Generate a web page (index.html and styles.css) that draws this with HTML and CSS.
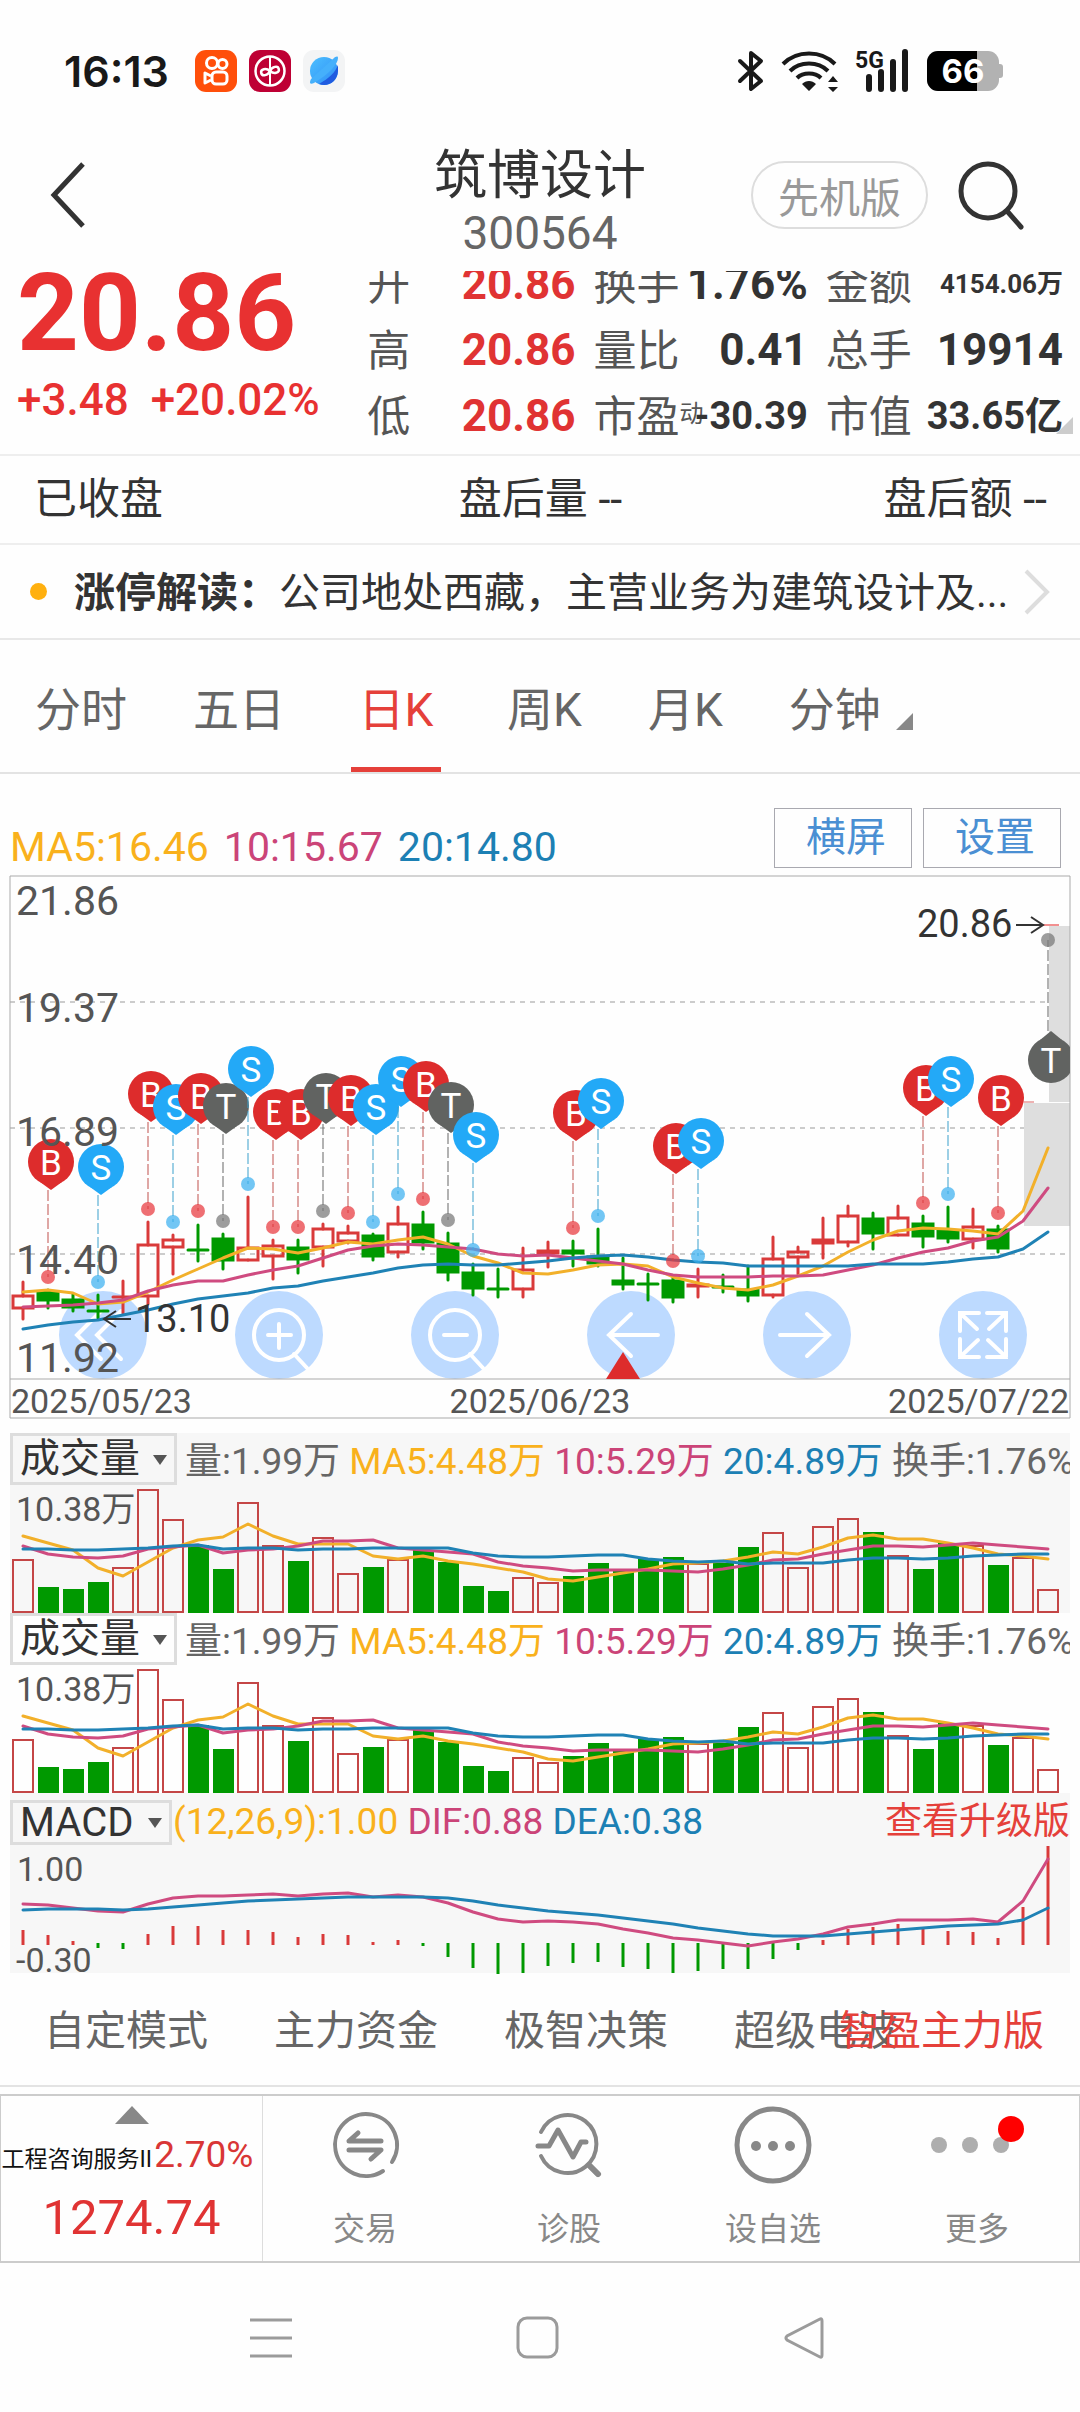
FILE: index.html
```html
<!DOCTYPE html>
<html lang="zh-CN">
<head>
<meta charset="utf-8">
<meta name="viewport" content="width=device-width">
<title>筑博设计 300564</title>
<link rel="stylesheet" href="styles.css">
</head>
<body>
<div class="status">
  <div class="status-left">
    <span class="clock">16:13</span>
    <svg class="app-icon" viewBox="0 0 42 42"><rect width="42" height="42" rx="11" fill="#ff4f0a"/><g fill="none" stroke="#fff" stroke-width="3"><circle cx="17" cy="13" r="5.500"/><circle cx="27.500" cy="14" r="4.500"/><rect x="17" y="22" width="15" height="12" rx="4"/><path d="M16 26l-6-3v10l6-3" stroke-linejoin="round"/></g></svg>
    <svg class="app-icon" viewBox="0 0 42 42"><rect width="42" height="42" rx="11" fill="#be0034"/><g fill="none" stroke="#fff" stroke-width="2"><circle cx="21" cy="21" r="14.500" stroke-width="2.500"/><path d="M21 7v12M21 23v12"/><path d="M21 21c-3-4-9-4-9 0s6 4 9 0 9-4 9 0-6 4-9 0z" stroke-width="2.500" transform="rotate(-12 21 21)"/></g></svg>
    <svg class="app-icon" viewBox="0 0 42 42"><defs><linearGradient id="planet" x1="0" y1="0" x2="1" y2="1"><stop offset="0" stop-color="#4cc0ff"/><stop offset="1" stop-color="#2f8cf5"/></linearGradient></defs><rect width="42" height="42" rx="11" fill="#f3f4f5"/><circle cx="21" cy="21" r="14" fill="url(#planet)"/><path d="M35 15c-3 8-9 13-19 19 8 3 18-1 19-13z" fill="#1f5be0"/><path d="M30 9c3-3 5-3 5-1 0 6-9 16-24 25-4 2-5 0-3-4z" fill="#45b0fb"/></svg>
  </div>
  <div class="status-right">
    <svg width="28" height="42" viewBox="0 0 28 42" fill="none" stroke="#191919" stroke-width="4" stroke-linejoin="round" stroke-linecap="round"><path d="M3 11l21 20-10 8V3l10 8L3 31"/></svg>
    <svg width="58" height="42" viewBox="0 0 58 42" fill="none" stroke="#191919" stroke-width="4"><path d="M2 14c14-14 38-14 52 0M9 21c10-10 28-10 38 0M16 28c6-6 18-6 24 0"/><path d="M28 41l-7-7c4-4 10-4 14 0zM52 26l5 6H47zM52 42l5-5H47z" fill="#191919" stroke="none"/></svg>
    <svg class="signal" width="56" height="44" viewBox="0 0 56 44"><text x="0" y="19" font-size="23">5G</text><path d="M14 28v12M26 23v17M38 13v27M50 3v37" stroke="#191919" stroke-width="6" stroke-linecap="round"/></svg>
    <svg class="battery" width="76" height="40" viewBox="0 0 76 40"><defs><clipPath id="cell"><rect width="72" height="40" rx="11"/></clipPath></defs><rect x="68" y="13" width="8" height="14" rx="3" fill="#b2b2b2"/><g clip-path="url(#cell)"><rect width="72" height="40" fill="#b2b2b2"/><rect width="50" height="40"/></g><text x="36" y="32" text-anchor="middle" font-size="33">66</text></svg>
  </div>
</div>

<header class="titlebar">
  <button class="back" aria-label="返回"><svg width="36" height="66" viewBox="0 0 36 66" fill="none" stroke="#333" stroke-width="5"><path d="M33 2L4 33l29 31"/></svg></button>
  <div class="titles"><h1>筑博设计</h1><p>300564</p></div>
  <div class="title-actions">
    <button class="pill">先机版</button>
    <button class="search" aria-label="搜索"><svg width="66" height="70" viewBox="0 0 66 70" fill="none" stroke="#333" stroke-width="5" stroke-linecap="round"><circle cx="30" cy="31" r="27"/><path d="M49 51l14 16"/></svg></button>
  </div>
</header>

<section class="quote">
  <div class="quote-scroll">
    <div class="price">
      <strong>20.86</strong>
      <p><span>+3.48</span><span>+20.02%</span></p>
    </div>
    <dl>
      <div><dt>开</dt><dd class="up">20.86</dd></div>
      <div><dt>高</dt><dd class="up">20.86</dd></div>
      <div><dt>低</dt><dd class="up">20.86</dd></div>
    </dl>
    <dl>
      <div><dt>换手</dt><dd>1.76%</dd></div>
      <div><dt>量比</dt><dd>0.41</dd></div>
      <div><dt>市盈<small>动</small></dt><dd class="medium">-30.39</dd></div>
    </dl>
    <dl>
      <div><dt>金额</dt><dd class="small">4154.06万</dd></div>
      <div><dt>总手</dt><dd>19914</dd></div>
      <div><dt>市值</dt><dd class="medium">33.65亿</dd></div>
    </dl>
  </div>
  <i class="corner"></i>
</section>

<section class="after-hours"><span>已收盘</span><span>盘后量 --</span><span>盘后额 --</span></section>

<a class="notice" href="#notice"><i></i><p><b>涨停解读：</b>公司地处西藏，主营业务为建筑设计及...</p><svg width="28" height="46" viewBox="0 0 28 46" fill="none" stroke="#ddd" stroke-width="4"><path d="M3 2l21 21L3 44"/></svg></a>

<nav class="periods">
  <button>分时</button><button>五日</button><button class="active">日K</button><button>周K</button><button>月K</button><button class="more">分钟</button>
</nav>

<section class="legend">
  <p><span class="c5">MA5:16.46</span><span class="c10">10:15.67</span><span class="c20">20:14.80</span></p>
  <button>横屏</button><button>设置</button>
</section>

<section class="kline">
  <div class="controls">
    <button aria-label="最早"><svg viewBox="0 0 88 88"><path d="M42 20L18 44l24 24M62 20L38 44l24 24"/></svg></button>
    <button aria-label="放大"><svg viewBox="0 0 88 88"><circle cx="44" cy="44" r="25"/><path d="M33 44h23M44 33v24M59 63l13 14"/></svg></button>
    <button aria-label="缩小"><svg viewBox="0 0 88 88"><circle cx="44" cy="44" r="25"/><path d="M33 44h23M59 63l13 14"/></svg></button>
    <button aria-label="左移"><svg viewBox="0 0 88 88"><path d="M71 44H22M44 23L22 44l22 21"/></svg></button>
    <button aria-label="右移"><svg viewBox="0 0 88 88"><path d="M17 44h49M44 23l22 21-22 21"/></svg></button>
    <button aria-label="全屏"><svg viewBox="0 0 88 88"><path d="M40 22H21v18M21 22l17 16M48 22h19v18M67 22L50 38M40 66H21V48M21 66l18-17M48 66h19V48M67 66L49 49"/></svg></button>
  </div>
  <svg id="kline" viewBox="0 0 1080 550"></svg>
</section>

<section class="panel gray">
  <div class="panel-head">
    <label class="pick"><select aria-label="指标一"><option>成交量</option></select></label>
    <p>量:1.99万 <span class="c5">MA5:4.48万</span> <span class="c10">10:5.29万</span> <span class="c20">20:4.89万</span> 换手:1.76%</p>
  </div>
  <svg class="volume" viewBox="10 52 1060 128"></svg>
</section>
<section class="panel">
  <div class="panel-head">
    <label class="pick"><select aria-label="指标二"><option>成交量</option></select></label>
    <p>量:1.99万 <span class="c5">MA5:4.48万</span> <span class="c10">10:5.29万</span> <span class="c20">20:4.89万</span> 换手:1.76%</p>
  </div>
  <svg class="volume" viewBox="10 52 1060 128"></svg>
</section>
<section class="panel gray">
  <div class="panel-head macd-head">
    <label class="pick"><select aria-label="指标三"><option>MACD</option></select></label>
    <p><span class="c5">(12,26,9):1.00</span> <span class="c10">DIF:0.88</span> <span class="c20">DEA:0.38</span></p>
    <a href="#upgrade">查看升级版</a>
  </div>
  <svg id="macd" viewBox="10 52 1060 128"></svg>
</section>

<nav class="modes">
  <a href="#custom">自定模式</a><a href="#funds">主力资金</a><a href="#decision">极智决策</a><a href="#wave">超级电波</a><a class="pro" href="#pro">智盈主力版</a>
</nav>

<footer class="toolbar">
  <a class="sector" href="#sector">
    <i></i>
    <p>工程咨询服务II<b>2.70%</b></p>
    <strong>1274.74</strong>
  </a>
  <button><svg viewBox="0 0 80 80"><path d="M67 57A31 31 0 1 0 58 66" stroke-width="4"/><path d="M56 36H24l9-8M24 45h32l-10 9" stroke-width="5"/></svg>交易</button>
  <button><svg viewBox="0 0 80 80"><path d="M12 27a29 29 0 1 1 0 24M60 61l9 9" stroke-width="4"/><path d="M61 61l8 8" stroke-width="6"/><path d="M9 41h11l9-16 15 27 8-15h5" stroke-width="5"/></svg>诊股</button>
  <button><svg viewBox="0 0 80 80"><circle cx="40" cy="40" r="36" stroke-width="5"/><g class="solid"><circle cx="23" cy="41" r="5"/><circle cx="40" cy="41" r="5"/><circle cx="57" cy="41" r="5"/></g></svg>设自选</button>
  <button><svg viewBox="0 0 80 80"><g class="pale"><circle cx="2" cy="40" r="8"/><circle cx="33" cy="40" r="8"/><circle cx="64" cy="40" r="8"/></g><circle class="dot" cx="74" cy="24" r="13"/></svg>更多</button>
</footer>

<nav class="system">
  <button aria-label="最近任务"><svg viewBox="0 0 44 44"><path d="M1 4h42M1 22h42M1 40h42"/></svg></button>
  <button aria-label="主屏幕"><svg viewBox="0 0 44 44"><rect x="2" y="2" width="39" height="39" rx="9"/></svg></button>
  <button aria-label="后退"><svg viewBox="0 0 44 44"><path d="M37 3L4 20q-2 2 0 4l33 17q2 1 2-2V5q0-3-2-2z"/></svg></button>
</nav>
<script src="charts.js"></script>
</body>
</html>
```
FILE: styles.css
```css
* { box-sizing: border-box; }
body {
  margin: 0;
  background: #fefefe;
  color: #333;
  font-family: Roboto, "Noto Sans CJK SC", sans-serif;
  overflow-x: hidden;
}
h1, p, dl, dd { margin: 0; }
button, select { font: inherit; color: inherit; background: none; border: 0; padding: 0; margin: 0; }
a { color: inherit; text-decoration: none; }
svg { display: block; }
svg text { font-family: Roboto, "Noto Sans CJK SC", sans-serif; }

.c5 { color: #f9b11c; }
.c10 { color: #cb4478; }
.c20 { color: #1c80b4; }

/* phone status bar */
.status { display: flex; justify-content: space-between; align-items: center; height: 142px; padding: 0 77px 0 64px; }
.status-left, .status-right { display: flex; align-items: center; }
.status-left { gap: 12px; }
.clock { font: 600 43px/50px Inter, sans-serif; color: #191919; margin-right: 14px; }
.app-icon { width: 42px; height: 42px; }
.status-right { gap: 16px; }
.status .signal text { font-family: Roboto, sans-serif; font-weight: 700; fill: #191919; }
.status .battery text { font-family: Inter, sans-serif; font-weight: 700; fill: #fff; }

.titlebar { display: grid; grid-template-columns: 1fr auto 1fr; height: 129px; }
.back { justify-self: start; align-self: center; padding: 0 0 23px 50px; }
.titles { text-align: center; padding-top: 4px; }
.titles h1 { font-size: 53px; line-height: 60px; font-weight: 400; }
.titles p { font-size: 46px; line-height: 54px; color: #666; }
.title-actions { display: flex; justify-content: flex-end; align-items: center; gap: 30px; padding: 0 56px 23px 0; }
.pill { width: 177px; height: 68px; border: 2px solid #ddd; border-radius: 34px; font-size: 41px; color: #999; }

/* price and key figures, scrolled a little under the title bar */
.quote { position: relative; overflow: hidden; }
.quote-scroll {
  display: grid;
  grid-template-columns: minmax(0, 332fr) minmax(0, 208fr) minmax(0, 214fr) minmax(0, 237fr);
  column-gap: 18px;
  margin-top: -20px;
  padding: 0 17px 5px 17px;
}
.price { padding-top: 7px; color: #e83131; white-space: nowrap; }
.price strong { display: block; font-size: 108px; line-height: 110px; font-weight: 700; }
.price p { display: flex; gap: 22px; font-size: 44px; line-height: 64px; font-weight: 500; }
.quote dl div { display: flex; justify-content: space-between; align-items: center; height: 66px; white-space: nowrap; }
.quote dt { font-size: 43px; color: #555; padding-bottom: 6px; }
.quote dt small { font-size: 24px; margin-right: -12px; vertical-align: 10px; line-height: 24px; }
.quote dd { font-size: 44px; line-height: 66px; font-weight: 700; }
.quote dd.medium { font-size: 38px; }
.quote dd.small { font-size: 26px; }
.quote dd.up { color: #e03333; }
.corner { position: absolute; right: 7px; bottom: 20px; border-left: 17px solid transparent; border-bottom: 17px solid #ccc; }

.after-hours {
  display: grid; grid-template-columns: 1fr auto 1fr; align-items: center;
  height: 89px; padding: 0 33px 10px 34px; border-top: 2px solid #eee;
  font-size: 43px;
}
.after-hours span:last-child { text-align: right; }

.notice { display: flex; align-items: center; height: 95px; padding: 0 29px 0 30px; border-top: 2px solid #eee; font-size: 41px; }
.notice i { flex: none; width: 17px; height: 17px; border-radius: 50%; background: #ffb00f; margin-right: 27px; }
.notice p { flex: 1; white-space: nowrap; overflow: hidden; padding-bottom: 6px; }

.periods { display: flex; gap: 66px; height: 136px; padding: 0 35px; border-top: 2px solid #e8e8e8; border-bottom: 2px solid #e3e3e3; font-size: 46px; color: #666; }
.periods button { display: flex; align-items: center; justify-content: center; }
.periods .active { min-width: 90px; color: #e5403a; box-shadow: inset 0 -5px #e5403a; border-radius: 3px 3px 0 0; }
.more::after { content: ""; margin: 30px 0 0 15px; border-left: 17px solid transparent; border-bottom: 17px solid #888; }

.legend { display: flex; align-items: flex-end; gap: 11px; padding: 34px 19px 2px 10px; font-size: 41px; }
.legend p { flex: 1; display: flex; gap: 15px; line-height: 42px; white-space: nowrap; }
.legend button { width: 138px; height: 60px; border: 1px solid #a9a9b0; padding-left: 6px; font-size: 40px; line-height: 58px; color: #4a8fd3; }

.kline { position: relative; }
.kline > svg { position: relative; width: 100%; pointer-events: none; }
.controls { position: absolute; left: 59px; right: 53px; bottom: 41px; display: flex; justify-content: space-between; }
.controls button { width: 88px; height: 88px; border-radius: 50%; background: #bddaff; }
.controls svg { width: 100%; fill: none; stroke: #fff; stroke-width: 4; stroke-linecap: round; }

.panel { margin: 0 10px; }
.kline + .panel { margin-top: 13px; }
.panel.gray { background: #f7f7f7; }
.panel > svg { width: 100%; overflow: visible; }
.panel-head { display: flex; height: 52px; font-size: 37px; line-height: 58px; color: #666; white-space: nowrap; overflow: hidden; }
.panel-head p { margin-left: 8px; }
.pick { position: relative; flex: none; width: 167px; }
.pick select { appearance: none; display: block; width: 100%; height: 52px; border: 3px solid #ddd; padding-left: 7px; font-size: 40px; line-height: 46px; color: #333; }
.pick::after { content: ""; position: absolute; right: 10px; top: 22px; border: 7px solid transparent; border-top: 10px solid #555; border-bottom: 0; }
.macd-head { padding-top: 7px; line-height: 44px; }
.macd-head .pick { width: 162px; }
.macd-head .pick select { height: 45px; line-height: 39px; }
.macd-head .pick::after { top: 18px; }
.macd-head p { flex: 1; margin-left: 1px; }
.macd-head a { color: #e5403a; }

.modes { display: flex; gap: 66px; align-items: center; height: 114px; padding: 0 44px 4px; border-bottom: 2px solid #e3e3e3; font-size: 41px; color: #666; white-space: nowrap; }
.modes .pro { margin-left: -125px; color: #e5403a; }

.toolbar { display: grid; grid-template-columns: 262px repeat(4, 1fr); height: 169px; margin-top: 7px; border: 1px solid #ccc; border-width: 2px 1px; }
.sector { display: flex; flex-direction: column; align-items: center; padding-top: 10px; border-right: 1px solid #ddd; white-space: nowrap; color: #111; }
.sector i { border: 17px solid transparent; border-bottom: 18px solid #888; border-top: 0; }
.sector p { font-size: 23px; line-height: 40px; margin: 11px 0; padding-right: 8px; }
.sector b { font-size: 37px; font-weight: 400; margin-left: 2px; color: #d93636; }
.sector strong { font-size: 49px; line-height: 54px; font-weight: 400; color: #e03333; }
.toolbar button { display: flex; flex-direction: column; align-items: center; gap: 24px; padding-top: 9px; font-size: 32px; line-height: 40px; color: #888; }
.toolbar svg { width: 80px; height: 80px; overflow: visible; fill: none; stroke: #888; stroke-linecap: round; stroke-linejoin: round; }
.toolbar .solid { fill: #888; stroke: none; }
.toolbar .pale { fill: #aeaeae; stroke: none; }
.toolbar .dot { fill: #f00; stroke: none; }

.system { display: flex; justify-content: center; align-items: center; gap: 223px; height: 149px; padding-right: 5px; }
.system svg { width: 44px; height: 44px; fill: none; stroke: #9b9b9b; stroke-width: 3; }

/* chart drawing */
.frame { fill: none; stroke: #aaa; stroke-width: 1; }
.grid { stroke: #ccc; stroke-width: 2; stroke-dasharray: 5 5; }
.line { fill: none; stroke-width: 3; stroke-linejoin: round; stroke-linecap: round; }
.s5 { stroke: #f2b02a; }
.s10 { stroke: #cf4b80; }
.s20 { stroke: #1f82b5; }
.rise { fill: none; stroke: #d93a3a; stroke-width: 3; stroke-linecap: round; }
.fall { fill: #090; stroke: #090; stroke-width: 3; stroke-linecap: round; }
.volume .rise { stroke: #c44646; stroke-width: 2; }
.volume .fall { stroke: none; }
#macd .rise, #macd .fall { stroke-linecap: butt; }
.axis { font-size: 41px; fill: #555; }
.axis-small { font-size: 34px; fill: #555; }
.mark { font-size: 38px; fill: #333; }
.arrow { fill: none; stroke: #333; stroke-width: 2; }
.letter { font-size: 35px; fill: #fff; text-anchor: middle; }
```
FILE: charts.js
```js
const X = i => 23 + 25 * i;

// high, body top, body bottom, low, direction (1 rise, 0 fall)
const candles = [
  [412,426,438,449,1],[420,422,430,438,0],[424,430,437,441,0],[425,441,441,448,0],[411,427,427,443,1],
  [352,375,426,434,1],[365,370,377,404,1],[355,380,380,391,0],[364,369,390,399,0],[327,378,390,390,1],
  [370,376,386,409,1],[370,378,389,403,0],[354,359,377,396,1],[356,363,371,373,1],[364,366,386,390,0],
  [337,354,382,387,1],[342,355,372,379,0],[363,374,402,410,0],[394,403,418,425,0],[399,419,419,427,0],
  [378,400,419,427,1],[372,381,383,397,1],[371,381,383,396,0],[359,387,393,396,0],[388,411,414,419,0],
  [404,414,414,430,0],[408,411,427,432,0],[399,415,416,427,1],[405,417,417,422,0],[396,420,425,431,0],
  [367,389,425,427,1],[377,382,387,404,1],[348,370,373,388,1],[336,346,372,376,1],[343,349,363,379,0],
  [336,348,365,365,1],[346,354,366,377,0],[337,361,368,372,0],[339,357,369,378,1],[356,360,378,382,0]
];
const price5 = [422,420,423,434,432,422,410,399,388,378,379,383,378,372,374,370,367,374,386,393,403,404,400,395,394,396,407,413,418,420,415,406,396,382,370,361,358,359,361,364,341,278];
const price10 = [437,436,435,433,430,421,415,411,411,405,400,396,388,380,376,374,375,377,379,384,386,385,388,391,394,400,405,407,407,407,406,406,405,400,395,388,382,378,371,367,351,318];
const price20 = [459,455,452,450,445,440,434,429,426,423,418,416,411,407,403,398,395,394,395,395,393,391,388,386,385,387,390,392,393,396,396,396,396,396,394,394,394,392,389,387,379,362];

// candle index, letter, y of the anchor dot
const pins = [
  [1,'B',407],[3,'S',412],[5,'B',339],[6,'S',352],[7,'B',341],[8,'T',351],[9,'S',314],[10,'B',357],[11,'B',357],
  [12,'T',341],[13,'B',343],[14,'S',352],[15,'S',324],[16,'B',329],[17,'T',350],[18,'S',380],[22,'B',358],[23,'S',346],
  [26,'B',391],[27,'S',386],[36,'B',333],[37,'S',324],[39,'B',343]
];
const tones = {
  B: ['#dd2c2c', '#c0504d', '#e8383d'],
  S: ['#23a9f7', '#3aa0cc', '#3cb0f0'],
  T: ['#616361', '#666', '#777']
};

const volumes = [126,154,156,149,134,56,86,112,136,69,112,128,104,140,134,126,117,129,153,158,144,149,143,130,136,126,124,130,130,114,99,134,93,85,99,122,136,110,112,132,124,156];
const risingDays = new Set([0,4,5,6,9,10,12,13,15,20,21,27,30,31,32,33,35,38,40,41]);
const vol5 = [103,110,117,135,143,129,115,107,104,91,103,111,111,111,123,126,123,128,131,135,139,146,148,144,140,136,131,130,128,124,119,121,114,105,102,106,106,110,115,121,123,126];
const vol10 = [113,121,124,125,123,116,114,112,120,117,116,113,108,108,107,115,117,119,121,129,133,135,138,137,137,137,138,139,136,132,127,126,121,117,113,113,114,112,110,112,114,116];
const vol20 = [116,116,117,117,116,115,113,112,116,115,115,117,116,116,115,115,115,115,120,123,124,124,123,122,122,126,128,129,128,131,130,130,130,127,125,125,126,125,123,122,121,121];

// ends of the histogram strokes; those above the zero line rise, those below it fall
const hist = [137,142,148,155,156,141,133,133,137,137,139,144,141,142,149,147,153,164,175,181,180,173,170,169,174,176,180,178,176,176,166,157,147,136,134,131,136,138,139,145,114,53];
const dif = [111,112,115,118,119,111,105,103,103,102,101,103,101,100,104,102,104,110,119,126,129,128,129,131,136,140,145,147,150,153,149,146,141,134,131,127,127,127,126,129,108,66];
const dea = [117,116,116,116,117,116,114,112,110,108,107,106,105,104,104,104,104,105,108,112,115,118,120,122,125,128,131,135,138,141,143,143,143,141,139,137,135,133,132,131,127,115];

const line = (ys, cls) => `<polyline class="line ${cls}" points="${ys.map((y, i) => X(i) + ',' + y).join(' ')}"/>`;
const stroke = (x1, y1, x2, y2, cls) => `<path class="${cls}" d="M${x1} ${y1}L${x2} ${y2}"/>`;

function candle([high, top, bottom, low, rise], i) {
  const x = X(i), cls = rise ? 'rise' : 'fall';
  const body = top === bottom
    ? stroke(x - 10, top, x + 10, top, cls)
    : `<rect class="${cls}" x="${x - 10}" y="${top}" width="20" height="${bottom - top}"/>`;
  return stroke(x, high, x, top, cls) + stroke(x, bottom, x, low, cls) + body;
}

function pin([i, letter, dotY], up) {
  const x = X(i), flip = up === true;
  const cy = flip ? dotY + 120 : dotY - 115;
  const tip = flip ? cy - 29 : cy + 28;
  const shoulder = flip ? cy - 20 : cy + 20;
  const [fill, dash, dot] = tones[letter];
  return `<path d="M${x} ${tip}V${dotY}" stroke="${dash}" stroke-width="1" stroke-dasharray="11 3"/>
    <circle cx="${x}" cy="${dotY}" r="7" fill="${dot}" fill-opacity=".72"/>
    <circle cx="${x + 3}" cy="${cy}" r="23" fill="${fill}"/>
    <path d="M${x - 8} ${shoulder}L${x + 3} ${tip}L${x + 14} ${shoulder}z" fill="${fill}"/>
    <text class="letter" x="${x + 3}" y="${cy + 13}">${letter}</text>`;
}

document.getElementById('kline').innerHTML = `
  <defs><clipPath id="plot"><rect x="10" y="0" width="1060" height="550"/></clipPath></defs>
  <path class="grid" d="M10 132H1070M10 258H1070M10 384H1070"/>
  <rect x="1024" y="233" width="46" height="123" fill="#dedede"/>
  <rect x="1049" y="56" width="21" height="176" fill="#dedede"/>
  <path d="M1024 232h10" stroke="#d66" stroke-width="1"/>
  <path d="M1043 55h16" stroke="#f29090" stroke-width="2"/>
  <path class="frame" d="M10 6H1070V548H10zM10 509H1070"/>
  ${candles.map(candle).join('')}
  ${line(price5, 's5')}${line(price10, 's10')}${line(price20, 's20')}
  <g clip-path="url(#plot)">${pins.map(p => pin(p)).join('')}${pin([41, 'T', 70], true)}</g>
  <path d="M623 482l17 27h-34z" fill="#dd2c2c"/>
  <g class="axis">
    <text x="16" y="45">21.86</text><text x="16" y="152">19.37</text><text x="16" y="276">16.89</text>
    <text x="16" y="404">14.40</text><text x="16" y="502">11.92</text>
  </g>
  <text class="mark" x="135" y="462">13.10</text>
  <text class="mark" x="917" y="67">20.86</text>
  <path class="arrow" d="M131 449H105M116 441l-12 8 12 8M1016 55h27M1031 47l12 8-12 8"/>
  <g class="axis-small">
    <text x="11" y="543">2025/05/23</text>
    <text x="540" y="543" text-anchor="middle">2025/06/23</text>
    <text x="1069" y="543" text-anchor="end">2025/07/22</text>
  </g>`;

document.querySelectorAll('.volume').forEach(svg => {
  svg.innerHTML = volumes.map((y, i) => risingDays.has(i)
    ? `<rect class="rise" x="${X(i) - 10}" y="${y + 1}" width="20" height="${178 - y}"/>`
    : `<rect class="fall" x="${X(i) - 10}" y="${y}" width="21" height="${180 - y}"/>`).join('')
    + line(vol5, 's5') + line(vol10, 's10') + line(vol20, 's20')
    + '<text class="axis-small" x="16" y="88">10.38万</text>';
});

document.getElementById('macd').innerHTML =
  hist.map((y, i) => y < 150 ? stroke(X(i), y, X(i), 152, 'rise') : stroke(X(i), 150, X(i), y, 'fall')).join('')
  + line(dif, 's10') + line(dea, 's20')
  + '<text class="axis-small" x="17" y="88">1.00</text><text class="axis-small" x="16" y="179">-0.30</text>';
```
